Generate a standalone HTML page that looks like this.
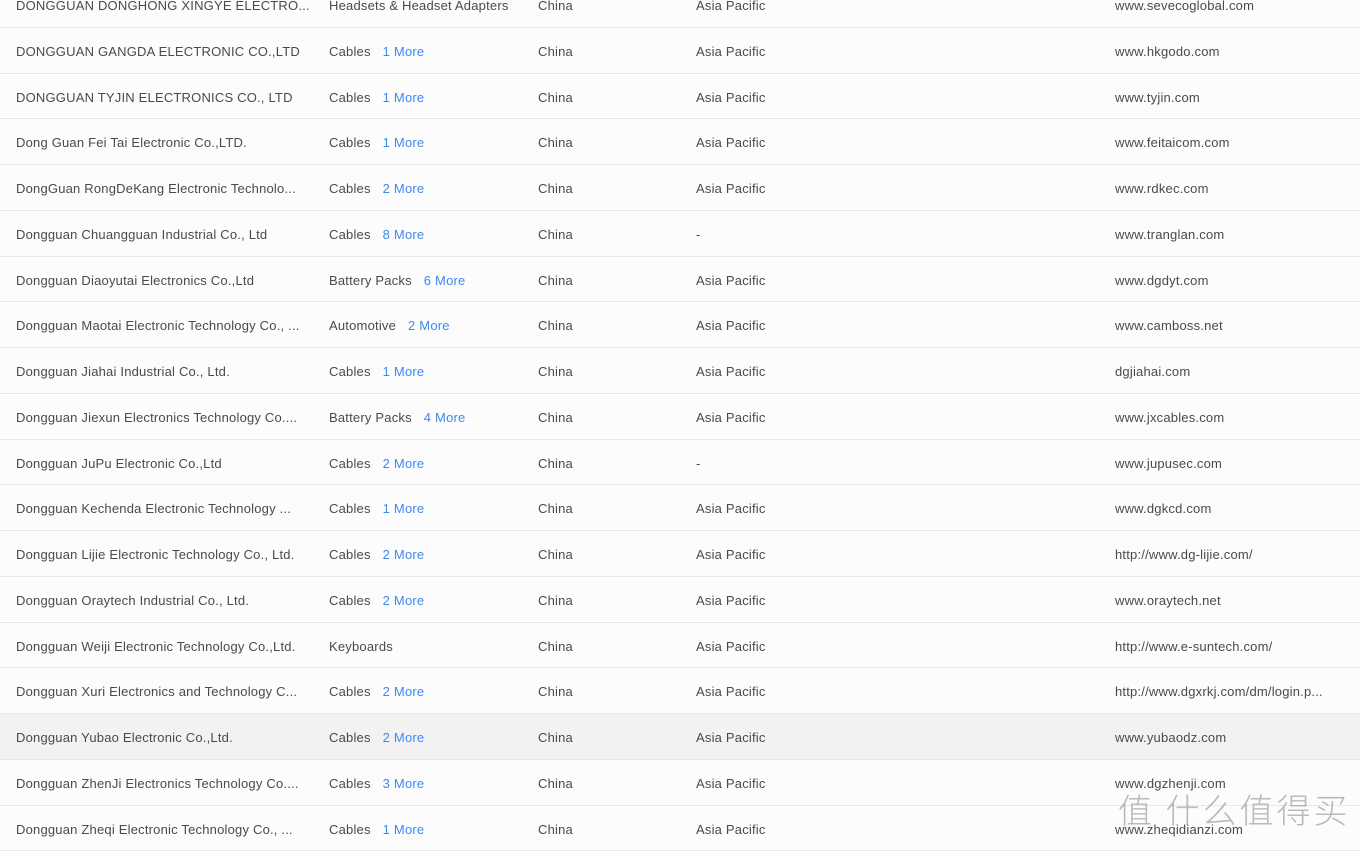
<!DOCTYPE html>
<html><head><meta charset="utf-8"><style>
body{margin:0;width:1360px;height:838px;overflow:hidden;background:#fcfcfc;font-family:"Liberation Sans","Noto Sans CJK SC",sans-serif;font-size:13px;color:#4a4a4a;position:relative}
.r{position:absolute;left:0;width:1360px;height:45px;border-bottom:1px solid #e8e8e8;background:#fcfcfc}
.r span{position:absolute;top:16px;white-space:nowrap;line-height:16px;letter-spacing:0.2px}
.c1{left:16px}.c2{left:329px}.c3{left:538px}.c4{left:696px}.c5{left:1115px}
.m{color:#3d8af0;margin-left:12px}
.hl{background:#f2f2f2}
.wm{position:absolute;left:1118px;top:784px;font-size:34px;color:rgba(120,120,120,.5);font-family:"Noto Sans CJK SC",sans-serif;font-weight:200;white-space:nowrap;letter-spacing:3px}
</style></head><body>
<div id="t"></div>
<script>
var d=[
["DONGGUAN DONGHONG XINGYE ELECTRO...","Headsets &amp; Headset Adapters","","Asia Pacific","www.sevecoglobal.com"],
["DONGGUAN GANGDA ELECTRONIC CO.,LTD","Cables","1 More","Asia Pacific","www.hkgodo.com"],
["DONGGUAN TYJIN ELECTRONICS CO., LTD","Cables","1 More","Asia Pacific","www.tyjin.com"],
["Dong Guan Fei Tai Electronic Co.,LTD.","Cables","1 More","Asia Pacific","www.feitaicom.com"],
["DongGuan RongDeKang Electronic Technolo...","Cables","2 More","Asia Pacific","www.rdkec.com"],
["Dongguan Chuangguan Industrial Co., Ltd","Cables","8 More","-","www.tranglan.com"],
["Dongguan Diaoyutai Electronics Co.,Ltd","Battery Packs","6 More","Asia Pacific","www.dgdyt.com"],
["Dongguan Maotai Electronic Technology Co., ...","Automotive","2 More","Asia Pacific","www.camboss.net"],
["Dongguan Jiahai Industrial Co., Ltd.","Cables","1 More","Asia Pacific","dgjiahai.com"],
["Dongguan Jiexun Electronics Technology Co....","Battery Packs","4 More","Asia Pacific","www.jxcables.com"],
["Dongguan JuPu Electronic Co.,Ltd","Cables","2 More","-","www.jupusec.com"],
["Dongguan Kechenda Electronic Technology ...","Cables","1 More","Asia Pacific","www.dgkcd.com"],
["Dongguan Lijie Electronic Technology Co., Ltd.","Cables","2 More","Asia Pacific","http://www.dg-lijie.com/"],
["Dongguan Oraytech Industrial Co., Ltd.","Cables","2 More","Asia Pacific","www.oraytech.net"],
["Dongguan Weiji Electronic Technology Co.,Ltd.","Keyboards","","Asia Pacific","http://www.e-suntech.com/"],
["Dongguan Xuri Electronics and Technology C...","Cables","2 More","Asia Pacific","http://www.dgxrkj.com/dm/login.p..."],
["Dongguan Yubao Electronic Co.,Ltd.","Cables","2 More","Asia Pacific","www.yubaodz.com"],
["Dongguan ZhenJi Electronics Technology Co....","Cables","3 More","Asia Pacific","www.dgzhenji.com"],
["Dongguan Zheqi Electronic Technology Co., ...","Cables","1 More","Asia Pacific","www.zheqidianzi.com"]];
var h="";
d.forEach(function(r,i){var top=Math.round(-18+45.75*i);
h+='<div class="r'+(i==16?' hl':'')+'" style="top:'+top+'px;height:'+(Math.round(-18+45.75*(i+1))-top-1)+'px"><span class="c1">'+r[0]+'</span><span class="c2">'+r[1]+(r[2]?'<span class="m" style="position:static">'+r[2]+'</span>':'')+'</span><span class="c3">China</span><span class="c4">'+r[3]+'</span><span class="c5">'+r[4]+'</span></div>';});
document.getElementById("t").innerHTML=h;
</script>
<div class="wm">值 什么值得买</div>
</body></html>
